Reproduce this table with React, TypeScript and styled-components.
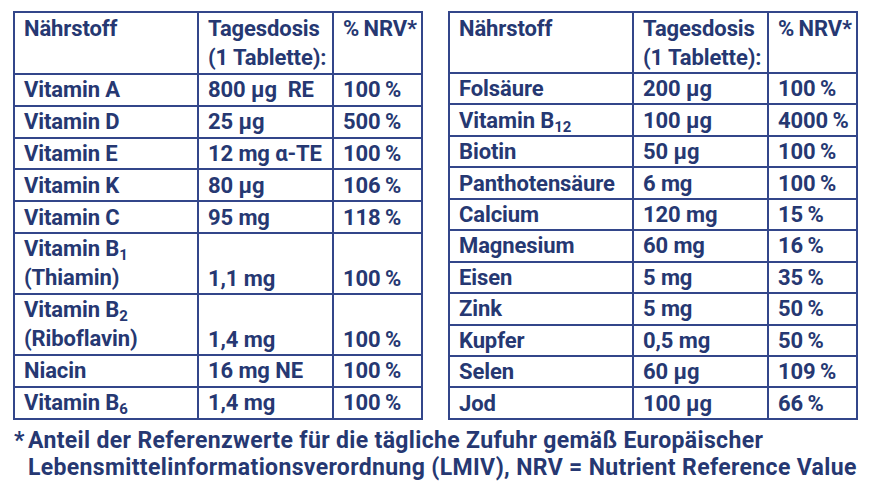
import { type FC, type ReactNode } from "react";
import styled, { createGlobalStyle } from "styled-components";

const NAVY = "#263872";
const LINE = "#33468a";

const GlobalStyle = createGlobalStyle`
  html, body {
    margin: 0;
    padding: 0;
    background: #ffffff;
  }
  body {
    font-family: Roboto, "Liberation Sans", sans-serif;
    color: ${NAVY};
  }
`;

const Page = styled.div`
  width: 870px;
  height: 489px;
  box-sizing: border-box;
  padding: 11px 0 0 13px;
  display: flex;
  flex-direction: column;
`;

const Tables = styled.div`
  display: flex;
  gap: 25px;
`;

const Table = styled.table`
  border-collapse: collapse;
  table-layout: fixed;
  width: 408px;
  font-size: 22px;
  font-weight: 700;
  letter-spacing: -0.1px;
`;

const Cell = styled.td<{ $align?: "top" | "bottom" | "middle" }>`
  border: 2px solid ${LINE};
  padding: 0 0 0 9px;
  height: 29.45px;
  line-height: 29px;
  vertical-align: ${(p) => p.$align ?? "middle"};
  white-space: nowrap;
  overflow: hidden;
`;

const HeadCell = styled(Cell)`
  height: 58px;
  line-height: 29px;
  vertical-align: top;
  padding-top: 1px;
`;

const Sub = styled.sub`
  font-size: 0.68em;
  vertical-align: -0.3em;
  line-height: 0;
`;

const Footnote = styled.div`
  display: flex;
  margin-top: 7px;
  font-size: 23px;
  font-weight: 700;
  line-height: 27px;
  letter-spacing: 0.35px;
`;

const Star = styled.span`
  width: 14px;
  flex: none;
  padding-left: 1px;
`;

type Row = {
  name: ReactNode;
  dose: string;
  nrv: string;
  tall?: boolean;
};

const PCT = "\u2009%";

const leftRows: Row[] = [
  { name: "Vitamin A", dose: "800 µg\u00a0\u00a0RE", nrv: "100" + PCT },
  { name: "Vitamin D", dose: "25 µg", nrv: "500" + PCT },
  { name: "Vitamin E", dose: "12 mg α-TE", nrv: "100" + PCT },
  { name: "Vitamin K", dose: "80 µg", nrv: "106" + PCT },
  { name: "Vitamin C", dose: "95 mg", nrv: "118" + PCT },
  {
    name: (
      <>
        Vitamin B<Sub>1</Sub>
        <br />
        (Thiamin)
      </>
    ),
    dose: "1,1 mg",
    nrv: "100" + PCT,
    tall: true,
  },
  {
    name: (
      <>
        Vitamin B<Sub>2</Sub>
        <br />
        (Riboflavin)
      </>
    ),
    dose: "1,4 mg",
    nrv: "100" + PCT,
    tall: true,
  },
  { name: "Niacin", dose: "16 mg NE", nrv: "100" + PCT },
  {
    name: (
      <>
        Vitamin B<Sub>6</Sub>
      </>
    ),
    dose: "1,4 mg",
    nrv: "100" + PCT,
  },
];

const rightRows: Row[] = [
  { name: "Folsäure", dose: "200 µg", nrv: "100" + PCT },
  {
    name: (
      <>
        Vitamin B<Sub>12</Sub>
      </>
    ),
    dose: "100 µg",
    nrv: "4000" + PCT,
  },
  { name: "Biotin", dose: "50 µg", nrv: "100" + PCT },
  { name: "Panthotensäure", dose: "6 mg", nrv: "100" + PCT },
  { name: "Calcium", dose: "120 mg", nrv: "15" + PCT },
  { name: "Magnesium", dose: "60 mg", nrv: "16" + PCT },
  { name: "Eisen", dose: "5 mg", nrv: "35" + PCT },
  { name: "Zink", dose: "5 mg", nrv: "50" + PCT },
  { name: "Kupfer", dose: "0,5 mg", nrv: "50" + PCT },
  { name: "Selen", dose: "60 µg", nrv: "109" + PCT },
  { name: "Jod", dose: "100 µg", nrv: "66" + PCT },
];

const NutrientTable: FC<{ rows: Row[] }> = ({ rows }) => (
  <Table>
    <colgroup>
      <col style={{ width: 184 }} />
      <col style={{ width: 135 }} />
      <col style={{ width: 89 }} />
    </colgroup>
    <tbody>
      <tr>
        <HeadCell>Nährstoff</HeadCell>
        <HeadCell>
          Tagesdosis
          <br />
          (1 Tablette):
        </HeadCell>
        <HeadCell>%&#8201;NRV*</HeadCell>
      </tr>
      {rows.map((r, i) => (
        <tr key={i}>
          <Cell $align={r.tall ? "top" : "middle"}>{r.name}</Cell>
          <Cell $align={r.tall ? "bottom" : "middle"}>{r.dose}</Cell>
          <Cell $align={r.tall ? "bottom" : "middle"}>{r.nrv}</Cell>
        </tr>
      ))}
    </tbody>
  </Table>
);

const App: FC = () => (
  <>
    <GlobalStyle />
    <Page>
      <Tables>
        <NutrientTable rows={leftRows} />
        <NutrientTable rows={rightRows} />
      </Tables>
      <Footnote>
        <Star>*</Star>
        <span>
          Anteil der Referenzwerte für die tägliche Zufuhr gemäß Europäischer
          <br />
          Lebensmittelinformationsverordnung (LMIV), NRV = Nutrient Reference
          Value
        </span>
      </Footnote>
    </Page>
  </>
);

export default App;
